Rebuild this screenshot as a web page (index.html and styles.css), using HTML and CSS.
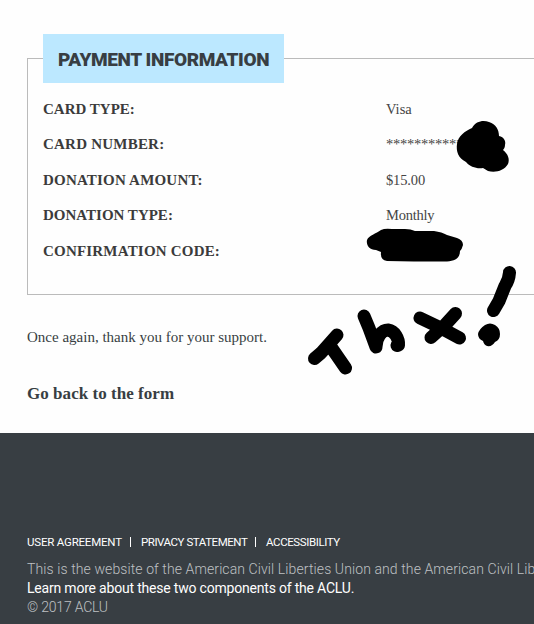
FILE: index.html
```
<!DOCTYPE html>
<html lang="en">
<head>
<meta charset="utf-8">
<title>Payment Information</title>
<link rel="stylesheet" href="styles.css">
</head>
<body>
<main class="content">
  <section class="payment">
    <h2 class="payment-title"><span>PAYMENT INFORMATION</span></h2>
    <dl class="details">
      <dt>CARD TYPE:</dt><dd>Visa</dd>
      <dt class="number">CARD NUMBER:</dt><dd class="masked">***********</dd>
      <dt class="wide">DONATION AMOUNT:</dt><dd class="amount">$15.00</dd>
      <dt>DONATION TYPE:</dt><dd class="frequency">Monthly</dd>
      <dt class="wide">CONFIRMATION CODE:</dt><dd></dd>
    </dl>
  </section>
  <p class="thanks">Once again, thank you for your support.</p>
  <a class="back">Go back to the form</a>
</main>
<footer class="footer">
  <nav class="links"><a class="agree">USER AGREEMENT</a><i></i><a class="privacy">PRIVACY STATEMENT</a><i></i><a class="access">ACCESSIBILITY</a></nav>
  <p class="about">This is the website of the American Civil Liberties Union and the American Civil Lib</p>
  <p class="learn">Learn more about these two components of the ACLU.</p>
  <p class="copy">© 2017 ACLU</p>
</footer>
<svg class="ink" width="534" height="624" viewBox="0 0 534 624" aria-hidden="true">
  <path d="M472 128C476 121 483 120 489 122C496 124 499 130 499 136C504 137 506 141 505 145C505 147 504 149 503 150C508 154 510 159 508 164C504 171 495 173 488 171L483 168C477 169 470 167 466 162C458 158 456 151 457 144C458 136 465 131 472 128Z"/>
  <path d="M381 230Q385 228 392 229L405 229Q411 229 415 231L434 231Q442 232 447 235L457 238Q463 240 463 245Q462 249 460 251C460 258 455 261 447 261.500L414 261.500L387 261Q380 260 381 252L376 250C369 250 366 245 367 240C369 235 376 234 381 230Z"/>
  <g class="strokes">
    <path d="M314.500 358.500L321 353L337 335M331 347L345.500 368"/>
    <path d="M364 316L369 328L376 347C376 337 382 330 388 330C395 331 399 339 398.500 345L397 345.500"/>
    <path d="M420 318L441 328L459.500 338M455.500 313.500L445 325L431 337.500"/>
    <path d="M509.500 272.500Q509 280 505 286L499 301L493.500 310.500"/>
  </g>
  <path d="M485 325Q490 322 495 325Q500 328 500 334Q500 340 495 342Q492 347 487 346Q484 345 483 341Q478 339 478 334Q479 329 485 325Z"/>
</svg>
</body>
</html>
```

FILE: styles.css
```
* { box-sizing: border-box; }
html { overflow: hidden; }
body {
  position: relative;
  width: 534px;
  height: 624px;
  margin: 0;
  overflow: hidden;
  background: #fefefe;
  color: #383e43;
  font-family: "Liberation Serif", serif;
}
p, h2, dl, dd { margin: 0; }
.content { height: 433px; padding: 58px 0 0 27px; white-space: nowrap; }
.payment {
  height: 237px;
  padding-left: 15px;
  border: 1px solid #bbb;
  border-right: 0;
}
.payment-title {
  width: 241px;
  height: 49px;
  margin-top: -25px;
  padding-left: 15px;
  background: #bce8ff;
  font: 900 19px/51px Roboto, sans-serif;
  letter-spacing: -.39px;
}
.details {
  display: grid;
  grid-template-columns: 343px 1fr;
  grid-template-rows: 35px 36px 35px 36px 35px;
  margin-top: 9px;
  line-height: 35px;
}
dt { font-size: 15px; font-weight: bold; color: #3b3b3b; }
dt.number { letter-spacing: .22px; }
dt.wide { letter-spacing: .2px; }
dd { font-size: 14.500px; color: #444; }
.amount { letter-spacing: -.15px; }
.frequency { letter-spacing: -.25px; }
.masked { letter-spacing: -.25px; }
.thanks { margin-top: 32px; font-size: 15px; line-height: 20px; }
.back { display: block; margin-top: 37px; font-size: 17px; font-weight: bold; line-height: 20px; letter-spacing: .04px; }
.footer {
  height: 191px;
  padding: 101px 0 0 27px;
  overflow: hidden;
  background: #383e43;
  color: #bfc1c3;
  font: 400 14px/19px Roboto, sans-serif;
  white-space: nowrap;
}
.links { display: flex; align-items: center; height: 16px; margin-bottom: 10px; font-size: 11.500px; letter-spacing: -.2px; color: #fff; }
.links a { width: 96px; }
.links .privacy { width: 107px; letter-spacing: -.45px; }
.links .access { letter-spacing: -.4px; }
.links i { width: 1px; height: 10px; margin: 0 10px 0 7px; background: #fff; }
.about { font-weight: 300; letter-spacing: .1px; }
.learn { color: #fff; letter-spacing: -.2px; }
.copy { font-weight: 300; letter-spacing: -.2px; }
.ink { position: absolute; top: 0; left: 0; }
.strokes { fill: none; stroke: #000; stroke-width: 13px; stroke-linecap: round; stroke-linejoin: round; }
```
